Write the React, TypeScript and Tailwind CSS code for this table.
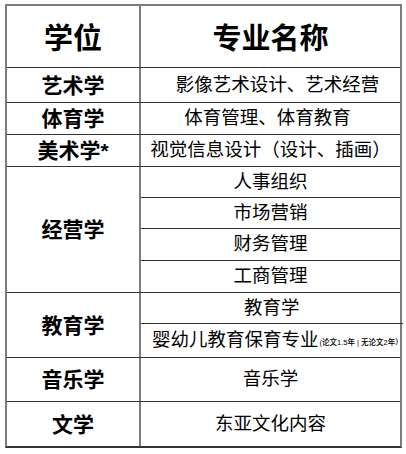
const cjk = "font-['Liberation_Sans','Noto_Sans_CJK_SC',sans-serif]"

const vline = 'border-r-2 border-[#7c7c7c]'
const hline = 'border-b border-[#333]'

function Label({ children }: { children: React.ReactNode }) {
  return (
    <div className={`w-[134px] shrink-0 flex items-center justify-center ${vline} text-[21px] font-bold text-black`}>
      {children}
    </div>
  )
}

function Cell({ h, line = true, className = '', children }: { h: string; line?: boolean; className?: string; children: React.ReactNode }) {
  return (
    <div className={`${h} flex items-center justify-center text-[18.5px] text-black whitespace-nowrap ${line ? hline : ''} ${className}`}>
      {children}
    </div>
  )
}

export default function App() {
  return (
    <div className={`min-h-[454px] bg-white pt-[4px] pl-[5px] ${cjk}`}>
      <div className="w-[397px] border-t-2 border-l-2 border-r-2 border-b-2 border-t-[#7c7c7c] border-l-[#7c7c7c] border-r-[#7c7c7c] border-b-[#333] leading-none">
        {/* header */}
        <div className={`flex h-[62px] ${hline}`}>
          <div className={`w-[134px] shrink-0 flex items-center justify-center pt-[6px] ${vline} text-[29px] font-bold`}>学位</div>
          <div className="flex-1 flex items-center justify-center pt-[6px] text-[29px] font-bold">专业名称</div>
        </div>

        <div className={`flex h-[35px] ${hline}`}>
          <Label>艺术学</Label>
          <Cell h="flex-1" line={false} className="pl-[14px]">影像艺术设计、艺术经营</Cell>
        </div>

        <div className={`flex h-[32px] ${hline}`}>
          <Label>体育学</Label>
          <Cell h="flex-1" line={false} className="pr-[6px]">体育管理、体育教育</Cell>
        </div>

        <div className={`flex h-[32px] ${hline}`}>
          <Label>美术学*</Label>
          <Cell h="flex-1" line={false}>视觉信息设计（设计、插画）</Cell>
        </div>

        <div className={`flex ${hline}`}>
          <Label>经营学</Label>
          <div className="flex-1 flex flex-col">
            <Cell h="h-[31px]">人事组织</Cell>
            <Cell h="h-[31px]">市场营销</Cell>
            <Cell h="h-[32px]">财务管理</Cell>
            <Cell h="h-[31px]" line={false}>工商管理</Cell>
          </div>
        </div>

        <div className={`flex ${hline}`}>
          <Label>教育学</Label>
          <div className="flex-1 flex flex-col">
            <Cell h="h-[31px]">教育学</Cell>
            <Cell h="h-[33px]" line={false} className="!justify-start pl-[11px]">
              婴幼儿教育保育专业
              <span className="text-[7.5px] font-medium ml-[1px] mt-[4px]">(论文1.5年 | 无论文2年）</span>
            </Cell>
          </div>
        </div>

        <div className={`flex h-[44px] ${hline}`}>
          <Label>音乐学</Label>
          <Cell h="flex-1" line={false}>音乐学</Cell>
        </div>

        <div className="flex h-[44px]">
          <Label>文学</Label>
          <Cell h="flex-1" line={false}>东亚文化内容</Cell>
        </div>
      </div>
    </div>
  )
}
